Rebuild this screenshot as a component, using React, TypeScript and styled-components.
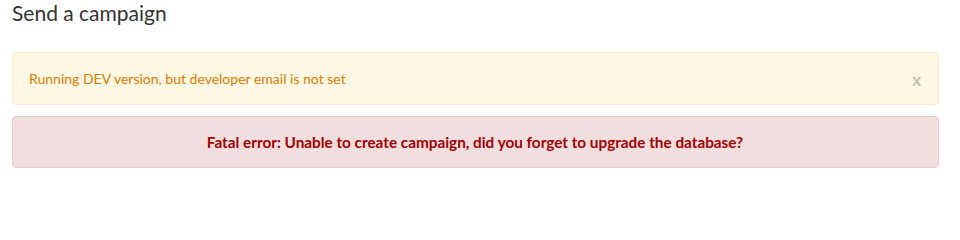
import React from "react";
import styled, { createGlobalStyle } from "styled-components";

const Global = createGlobalStyle`
  html, body { margin: 0; padding: 0; background: #fff; }
  body { font-family: Lato, "Open Sans", sans-serif; color: #333; }
`;

const Page = styled.div`
  padding: 0 21px 0 12px;
  display: flex;
  flex-direction: column;
`;

const Title = styled.h1`
  margin: 0;
  height: 40px;
  font-family: Lato, sans-serif;
  font-weight: 400;
  font-size: 21px;
  line-height: 25px;
  color: #333;
`;

const Alerts = styled.div`
  margin-top: 12px;
  display: flex;
  flex-direction: column;
  gap: 11px;
`;

const Alert = styled.div<{ $kind: "warning" | "error" }>`
  box-sizing: border-box;
  height: ${(p) => (p.$kind === "warning" ? 53 : 52)}px;
  display: flex;
  align-items: center;
  justify-content: ${(p) => (p.$kind === "error" ? "center" : "space-between")};
  padding: 0 17px 0 16px;
  border-radius: 4px;
  border: 1px solid ${(p) => (p.$kind === "warning" ? "#faebcc" : "#ebccd1")};
  background: ${(p) => (p.$kind === "warning" ? "#fcf8e3" : "#f2dede")};
  color: ${(p) => (p.$kind === "warning" ? "#e07b00" : "#a50000")};
  font-family: Lato, sans-serif;
  font-size: ${(p) => (p.$kind === "error" ? 15.3 : 14)}px;
  font-weight: ${(p) => (p.$kind === "error" ? 700 : 400)};
`;

const Close = styled.span`
  font-family: Lato, sans-serif;
  font-weight: 700;
  font-size: 17px;
  color: #c2c0b3;
  margin-top: 2px;
`;

export default function App() {
  return (
    <>
      <Global />
      <Page>
        <Title>Send a campaign</Title>
        <Alerts>
          <Alert $kind="warning">
            <span>Running DEV version, but developer email is not set</span>
            <Close>x</Close>
          </Alert>
          <Alert $kind="error">
            Fatal error: Unable to create campaign, did you forget to upgrade the database?
          </Alert>
        </Alerts>
      </Page>
    </>
  );
}
